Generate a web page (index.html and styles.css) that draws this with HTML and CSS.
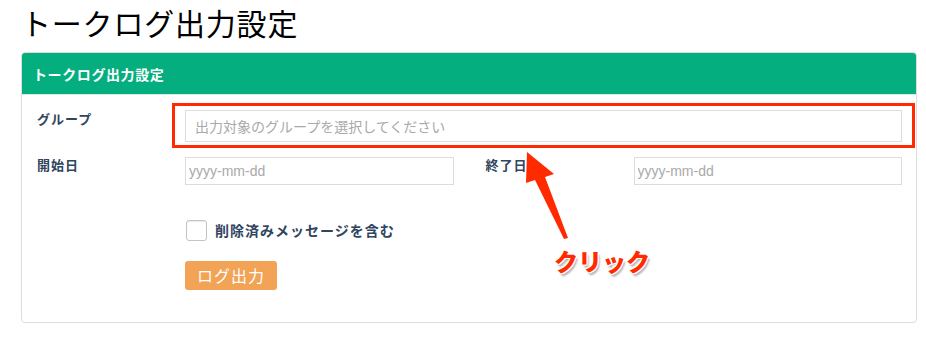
FILE: index.html
```html
<!DOCTYPE html>
<html lang="ja">
<head>
<meta charset="utf-8">
<title>トークログ出力設定</title>
<link rel="stylesheet" href="styles.css">
</head>
<body>
<div class="page">
  <h1 class="title">トークログ出力設定</h1>
  <div class="panel">
    <div class="panel-head">トークログ出力設定</div>
    <div class="panel-body">
      <div class="row">
        <label class="label">グループ</label>
        <div class="field">
          <input class="input input-group" type="text" placeholder="出力対象のグループを選択してください">
          <div class="highlight"></div>
        </div>
      </div>
      <div class="row row-dates">
        <label class="label">開始日</label>
        <div class="field"><input class="input input-date" type="text" placeholder="yyyy-mm-dd"></div>
        <label class="label label-end">終了日</label>
        <div class="field"><input class="input input-date" type="text" placeholder="yyyy-mm-dd"></div>
      </div>
      <div class="check-row">
        <span class="checkbox"></span>
        <span class="check-label">削除済みメッセージを含む</span>
      </div>
      <div class="btn-row">
        <button class="btn">ログ出力</button>
      </div>
    </div>
  </div>
  <svg class="arrow" width="60" height="100" viewBox="0 0 60 100">
    <polygon points="7,0 34,22 25,25 48,86 44,87 15,28 6,31" fill="#ff2a00"/>
  </svg>
  <div class="click">クリック</div>
</div>
</body>
</html>
```
FILE: styles.css
```css
* { box-sizing: border-box; }
body {
  margin: 0;
  background: #fff;
  font-family: "Noto Sans CJK JP", "Noto Sans", sans-serif;
}
.page {
  position: relative;
  padding: 0 9px 0 21px;
}
.title {
  margin: 0;
  height: 52px;
  padding-top: 1px;
  font-size: 30px;
  font-weight: 400;
  letter-spacing: 0.8px;
  line-height: 42px;
  color: #000;
}
.panel {
  width: 896px;
  border: 1px solid #ddd;
  border-radius: 4px;
  overflow: hidden;
}
.panel-head {
  height: 42px;
  background: #04ae7e;
  color: #fff;
  font-size: 14px;
  letter-spacing: 0.6px;
  font-weight: 700;
  line-height: 42px;
  padding-left: 11px;
  border-bottom: 1px solid #d8ece4;
}
.panel-body {
  padding: 14px 14px 32px 15px;
}
.row {
  display: flex;
  align-items: flex-start;
  margin-bottom: 15px;
}
.label {
  width: 148px;
  flex: none;
  font-size: 13px;
  font-weight: 700;
  letter-spacing: 1px;
  color: #2f4560;
  line-height: 20px;
}
.row-dates .label { margin-top: -2px; }
.row-dates .label-end { margin-left: 32px; }
.field {
  flex: 1;
  position: relative;
}
.input {
  display: block;
  width: 100%;
  border: 1px solid #dcdcdc;
  background: #fff;
  font-family: "Noto Sans CJK JP", "Noto Sans", sans-serif;
  outline: none;
}
.input-group {
  height: 32px;
  margin-top: 1px;
  padding: 0 9px;
  font-size: 14px;
}
.input-date {
  height: 28px;
  padding: 0 3px;
  font-size: 14px;
  font-family: "Liberation Sans", "Noto Sans CJK JP", sans-serif;
}
.input::placeholder { color: #a9a9a9; }
.highlight {
  position: absolute;
  left: -13px;
  right: -13px;
  top: -6px;
  bottom: -6px;
  border: 3px solid #ff2a00;
  pointer-events: none;
}
.check-row {
  display: flex;
  align-items: center;
  margin-left: 148px;
  margin-top: 34px;
  height: 22px;
}
.checkbox {
  width: 21px;
  height: 21px;
  border: 1px solid #c4c4c4;
  border-radius: 3px;
  box-shadow: inset 0 1px 1px rgba(0,0,0,0.08);
  margin-left: 1px;
  margin-right: 8px;
}
.check-label {
  font-size: 14px;
  font-weight: 700;
  letter-spacing: 1px;
  color: #2f4560;
}
.btn-row {
  margin-left: 148px;
  margin-top: 20px;
}
.btn {
  display: block;
  width: 92px;
  height: 29px;
  border: none;
  border-radius: 3px;
  background: #f2a355;
  color: #fff;
  font-family: "Noto Sans CJK JP", "Noto Sans", sans-serif;
  font-size: 16px;
  letter-spacing: 1px;
  line-height: 29px;
  padding: 0;
}
.arrow {
  position: absolute;
  left: 520px;
  top: 152px;
}
.click {
  position: absolute;
  left: 554px;
  top: 243px;
  font-size: 24px;
  font-weight: 900;
  color: #ff2a00;
  text-shadow: 1px 1px 0 #fff, -1px -1px 0 #fff, 1px -1px 0 #fff, -1px 1px 0 #fff, 2px 3px 2px rgba(0,0,0,0.3);
}
```
